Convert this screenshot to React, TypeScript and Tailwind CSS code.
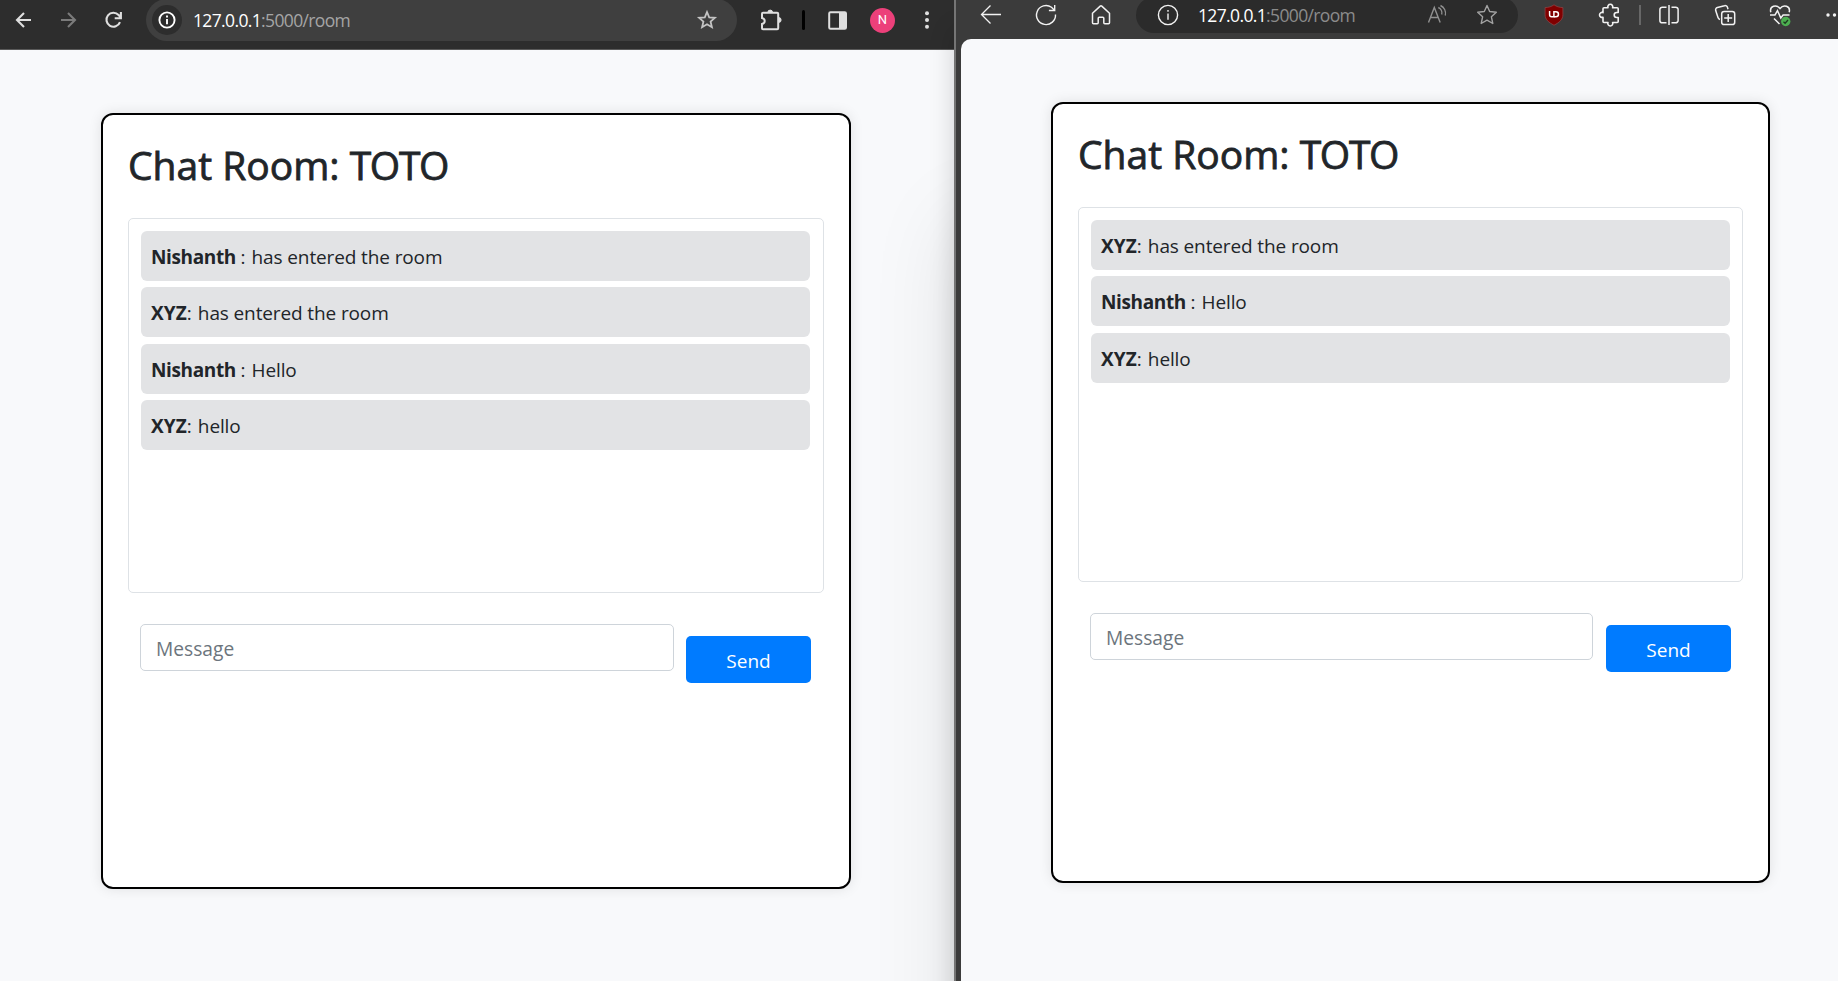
import React from "react";

type Message = { name: string; text: string };

const leftMessages: Message[] = [
  { name: "Nishanth ", text: "has entered the room" },
  { name: "XYZ", text: "has entered the room" },
  { name: "Nishanth ", text: "Hello" },
  { name: "XYZ", text: "hello" },
];

const rightMessages: Message[] = [
  { name: "XYZ", text: "has entered the room" },
  { name: "Nishanth ", text: "Hello" },
  { name: "XYZ", text: "hello" },
];

function Icon({ className = "", sw = 1.4, children }: { className?: string; sw?: number; children: React.ReactNode }) {
  return (
    <svg
      width="24"
      height="24"
      viewBox="0 0 24 24"
      fill="none"
      stroke="currentColor"
      strokeWidth={sw}
      className={`shrink-0 ${className}`}
    >
      {children}
    </svg>
  );
}

function ChromeToolbar() {
  return (
    <div className="h-[50px] shrink-0 border-b border-[#5a5a5a] bg-[#2d2d2d] text-[#dfdfdf]">
      <div className="flex h-10 items-center pl-3">
        <Icon sw={2.1}>
          <path d="M19 12H5.5M12 5L5 12l7 7" />
        </Icon>
        <Icon sw={2.1} className="ml-[21px] text-[#7b7b7b]">
          <path d="M4 12h13.5M11 5l7 7-7 7" />
        </Icon>
        <Icon sw={2.1} className="ml-[21px]">
          <path d="M18 14.2A7 7 0 1 1 16.6 7L18.6 9.2M18.9 4v6.2h-6.2" />
        </Icon>
        <div className="ml-5 flex h-[42px] w-[591px] shrink-0 items-center rounded-full bg-[#3f3f3f] pl-1.5 pr-[18px]">
          <div className="flex size-[30px] items-center justify-center rounded-full bg-[#2d2d2d] text-white">
            <Icon sw={1.9}>
              <circle cx="12" cy="12" r="7.6" />
              <path d="M12 11v5.2M12 7.6v2" />
            </Icon>
          </div>
          <div className="ml-[11px] text-[17.5px] tracking-[-0.64px] text-[#a5a5a5]">
            <span className="text-white">127.0.0.1</span>:5000/room
          </div>
          <Icon sw={1.8} className="ml-auto text-[#c4c4c4]">
            <path d="M12 4l2.2 5.3 5.7.5-4.3 3.8 1.3 5.6L12 16.2l-4.9 3 1.3-5.6-4.3-3.8 5.7-.5z" />
          </Icon>
        </div>
        <Icon sw={2} className="ml-[22px]">
          <path d="M4 4.8h14.2a1 1 0 0 1 1 1v14.400a1 1 0 0 1-1 1H4a1 1 0 0 1-1-1v-4.200c3.600-.8 3.600-5.200 0-6V5.800a1 1 0 0 1 1-1z" />
          <path d="M8.800 4.500a2.400 2.400 0 0 1 4.800 0zM19.700 9.600a2.400 2.400 0 0 1 0 4.800z" fill="currentColor" strokeWidth="1" />
        </Icon>
        <div className="ml-[19px] h-5 w-[3px] shrink-0 rounded-full bg-black" />
        <Icon sw={2} className="ml-[21px]">
          <rect x="3.200" y="4.200" width="16.800" height="16.600" rx="1.300" />
          <path d="M13 4h7v17h-7z" fill="currentColor" stroke="none" />
        </Icon>
        <div className="ml-5 flex size-[25px] shrink-0 items-center justify-center rounded-full bg-[#ec407a] font-[Roboto] text-[13px] text-white">
          N
        </div>
        <Icon className="ml-5">
          <g fill="currentColor" stroke="none">
            <circle cx="12" cy="5.300" r="2" />
            <circle cx="12" cy="12" r="2" />
            <circle cx="12" cy="18.700" r="2" />
          </g>
        </Icon>
      </div>
    </div>
  );
}

function EdgeToolbar() {
  return (
    <div className="h-[39px] shrink-0 bg-[#3b3b3b] text-[#f2f2f2]">
      <div className="flex h-[30px] items-center pl-[23px]">
        <Icon sw={1.3}>
          <path d="M22 11.500H2.500M11.500 2.500l-9 9 9 9" />
        </Icon>
        <Icon sw={1.400} className="ml-[31px]">
          <path d="M21.500 11.500A9.500 9.500 0 1 1 17.500 4.300L20.500 7.300M20.700 2v5.500h-5.800" />
        </Icon>
        <Icon sw={1.500} className="ml-[31px]">
          <path d="M3.500 10.300l7.700-7.200a1.200 1.200 0 0 1 1.600 0l7.700 7.200v9.400a1 1 0 0 1-1 1h-3.700a1 1 0 0 1-1-1v-4.500a1 1 0 0 0-1-1h-3.600a1 1 0 0 0-1 1v4.500a1 1 0 0 1-1 1H4.500a1 1 0 0 1-1-1z" />
        </Icon>
        <div className="ml-[23px] flex h-9 w-[382px] shrink-0 items-center rounded-full bg-[#2b2b2b] pl-[20px] pr-[18px]">
          <Icon sw={1.400}>
            <circle cx="12" cy="12" r="9.600" />
            <path d="M12 10.500v6.300M12 7v1.700" />
          </Icon>
          <div className="ml-[18px] text-[17.5px] tracking-[-0.64px] text-[#8b8b8b]">
            <span className="text-white">127.0.0.1</span>:5000/room
          </div>
          <Icon className="ml-auto text-[#909090]">
            <path d="M2.500 19.500L8.300 4.500 14.200 19.500M4.600 14.500h7.500M12.300 4.500a6 6 0 0 1 3.400 7M14.500 2.500a9 9 0 0 1 4.800 10" />
          </Icon>
          <Icon className="ml-[25px] mr-px text-[#a2a2a2]" sw={1.400}>
            <path
              d="M12 2.500l2.700 6 6.600.8-4.900 4.500 1.400 6.700-5.800-3.300-5.800 3.300 1.400-6.700-4.900-4.500 6.600-.8z"
              strokeLinejoin="round"
            />
          </Icon>
        </div>
        <Icon className="ml-6">
          <path
            d="M12 1.800c2.500 1.800 5.400 2.700 8.900 2.800v7.200c0 4.500-3.500 7.700-8.900 10.400-5.400-2.700-8.900-5.900-8.900-10.400V4.600c3.500-.1 6.400-1 8.900-2.800z"
            fill="#800000"
            stroke="#94494b"
            strokeWidth=".7"
          />
          <path d="M7.600 8v3.800a2 2 0 0 0 2 2h2.300V8" stroke="#fff" strokeWidth="1.500" />
          <path d="M11.900 8.700h2a2.500 2.500 0 0 1 0 5.100h-2" stroke="#fff" strokeWidth="1.500" />
        </Icon>
        <Icon sw={1.600} className="ml-8">
          <path
            strokeLinejoin="round"
            d="M6 4.800h4a2.500 2.500 0 1 1 4.600 0h4.600a1 1 0 0 1 1 1v3.700h-1.500a2.500 2.500 0 0 0 0 5h1.500v4a1 1 0 0 1-1 1h-4.600a2.500 2.500 0 1 1-4.600 0H6a1 1 0 0 1-1-1v-4.300a2.500 2.500 0 1 1 0-4.600V5.800a1 1 0 0 1 1-1z"
          />
        </Icon>
        <div className="ml-[17px] h-5 w-[2px] shrink-0 bg-[#676767]" />
        <Icon sw={1.500} className="ml-4">
          <path d="M9.500 4.200H5.300a2.400 2.400 0 0 0-2.400 2.400v10.800a2.400 2.400 0 0 0 2.400 2.400h4.200M14.500 4.200h4.200a2.400 2.400 0 0 1 2.400 2.400v10.800a2.400 2.400 0 0 1-2.400 2.400h-4.200M12 2v20" />
        </Icon>
        <Icon sw={1.500} className="ml-8">
          <path d="M7 16.500a3 3 0 0 1-2-2L2.700 7.600a2.400 2.400 0 0 1 1.700-3L11.500 2.700a2.400 2.400 0 0 1 3 1.700l.5 1.800" />
          <rect x="8.700" y="8.400" width="13" height="13.200" rx="2.400" />
          <path d="M15.200 11v8M11.200 15h8" />
        </Icon>
        <Icon sw={1.500} className="ml-[31px]">
          <path d="M2.800 9.200C1.200 3 8.500.8 12 5.600 15.500.8 22.800 3 21.200 9.200M2 12h5l2.500-4.300 3.300 7.300 2.300-3h6.400M6 15.500l5.500 5.500" />
          <circle cx="17.700" cy="18.500" r="4.700" fill="#4caf50" stroke="none" />
          <path d="M15.500 18.700l1.600 1.500 2.900-3.200" stroke="#1d3a20" strokeWidth="1.300" />
        </Icon>
        <svg width="13" height="24" viewBox="0 0 13 24" fill="currentColor" className="ml-[33px] shrink-0">
          <circle cx="3" cy="12" r="1.700" />
          <circle cx="9.500" cy="12" r="1.700" />
        </svg>
      </div>
    </div>
  );
}

type ChatRoomProps = { messages: Message[]; className: string; listClass: string; formClass: string };

function ChatRoom({ messages, className, listClass, formClass }: ChatRoomProps) {
  return (
    <div
      className={`flex flex-col rounded-[12px] border-2 border-black bg-white px-[25px] text-[#212529] shadow-[0_0_13px_rgba(0,0,0,0.1)] ${className}`}
    >
      <h1 className="mt-[26px] h-12 whitespace-nowrap text-[39px] font-medium leading-[48px] tracking-[0px] [-webkit-text-stroke:0.8px_#212529]">
        Chat Room: <span className="tracking-[-1.3px]">TOTO</span>
      </h1>
      <div
        className={`mt-[29px] flex h-[375px] shrink-0 flex-col gap-[6.25px] rounded-[5px] border border-[#dee2e6] pl-3 pt-3 ${listClass}`}
      >
        {messages.map((m, i) => (
          <div
            key={i}
            className="h-[50px] shrink-0 whitespace-pre rounded-[6px] bg-[#e2e3e5] pl-2.5 text-[19px] leading-[53px]"
          >
            <strong className={m.name === "XYZ" ? "font-bold tracking-[0.1px]" : "font-bold tracking-[-0.36px]"}>{m.name}</strong>:
            <span className="ml-[6px] tracking-[-0.12px]">{m.text}</span>
          </div>
        ))}
      </div>
      <div className={`mt-[31px] flex items-start pl-3 ${formClass}`}>
        <input
          placeholder="Message"
          className="h-[47px] min-w-0 flex-1 rounded-[5px] border border-[#ced4da] bg-white px-[15px] pt-0.5 text-[19.2px] outline-none placeholder:text-[#6c757d]"
        />
        <button className="mt-3 h-[47px] w-[125px] shrink-0 rounded-[5px] bg-[#007bff] pt-[3px] text-[19px] text-white">
          Send
        </button>
      </div>
    </div>
  );
}

export default function App() {
  return (
    <div className="flex h-[981px] w-[1838px] overflow-hidden bg-[#f8f9fb] font-['Open_Sans','Noto_Sans',sans-serif]">
      <div className="flex w-[954px] shrink-0 flex-col">
        <ChromeToolbar />
        <div className="flex flex-1 items-start pl-[101px] pt-[63px]">
          <ChatRoom
            messages={leftMessages}
            className="h-[776px] w-[750px]"
            listClass="pr-[13px]"
            formClass="gap-3 pr-[13px]"
          />
        </div>
      </div>
      <div className="relative flex flex-1 flex-col border-l-2 border-[#757575] bg-[#3b3b3b] shadow-[0_30px_24px_rgba(0,0,0,0.16),0_220px_80px_rgba(0,0,0,0.1)]">
        <EdgeToolbar />
        <div className="ml-[5px] flex flex-1 items-start rounded-tl-[10px] bg-[#f8f9fb] pl-[90px] pt-[63px]">
          <ChatRoom
            messages={rightMessages}
            className="h-[781px] w-[719px]"
            listClass="pr-3"
            formClass="gap-[13px] pr-3"
          />
        </div>
      </div>
    </div>
  );
}
